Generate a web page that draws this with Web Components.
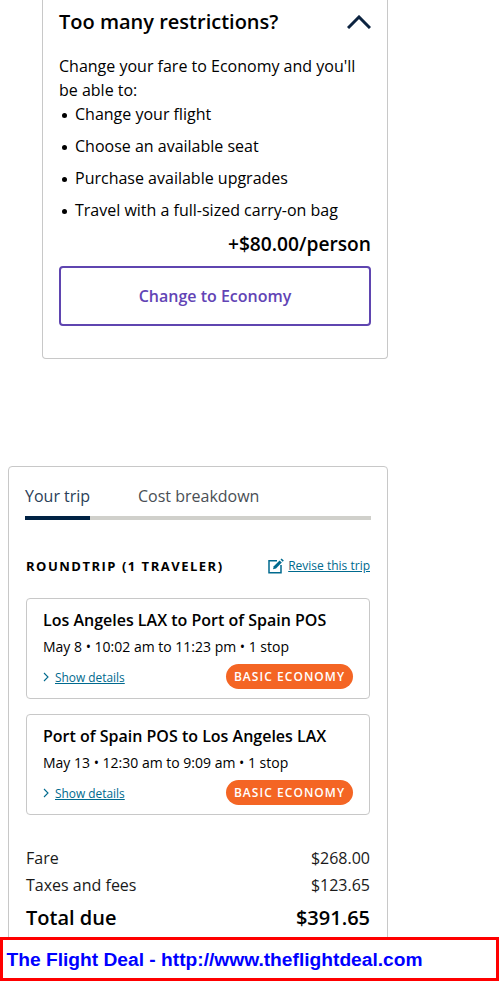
<!DOCTYPE html>
<html>
<head>
<meta charset="utf-8">
<style>
  html, body { margin: 0; padding: 0; background: #fff; }
  body { height: 981px; overflow: hidden; position: relative; font-family: "Open Sans", sans-serif; color: #000; }
</style>
</head>
<body>
<upsell-card price="+$80.00/person" action="Change to Economy">
  <span slot="title">Too many restrictions?</span>
  <span slot="intro">Change your fare to Economy and you'll be able to:</span>
  <li>Change your flight</li>
  <li>Choose an available seat</li>
  <li>Purchase available upgrades</li>
  <li>Travel with a full-sized carry-on bag</li>
</upsell-card>

<trip-summary>
  <flight-card route="Los Angeles LAX to Port of Spain POS" times="May 8 • 10:02 am to 11:23 pm • 1 stop"></flight-card>
  <flight-card route="Port of Spain POS to Los Angeles LAX" times="May 13 • 12:30 am to 9:09 am • 1 stop"></flight-card>
  <div slot="costs">
    <cost-row label="Fare" amount="$268.00"></cost-row>
    <cost-row label="Taxes and fees" amount="$123.65"></cost-row>
    <cost-row total label="Total due" amount="$391.65"></cost-row>
  </div>
</trip-summary>

<deal-banner>The Flight Deal - http://www.theflightdeal.com</deal-banner>

<script>
class UpsellCard extends HTMLElement {
  constructor() {
    super();
    this.attachShadow({ mode: 'open' });
    this.shadowRoot.innerHTML = `
      <style>
        :host {
          display: block;
          box-sizing: border-box;
          width: 346px;
          height: 359px;
          margin-left: 42px;
          padding: 9px 16px 0;
          background: #fff;
          border: 1px solid #c8c8c8;
          border-top: 0;
          border-radius: 0 0 4px 4px;
          font: 400 16px/24px "Open Sans", sans-serif;
          color: #000;
        }
        .head { display: flex; justify-content: space-between; align-items: center; height: 26px; }
        .title { font-size: 20px; font-weight: 600; line-height: 26px; }
        svg { display: block; }
        .intro { margin-top: 19px; }
        ::slotted(li) {
          display: block;
          height: 24px;
          margin-bottom: 8px;
          padding-left: 16px;
        }
        ::slotted(li)::before {
          content: "";
          display: inline-block;
          width: 5px;
          height: 5px;
          margin-left: -13px;
          margin-right: 8px;
          border-radius: 50%;
          background: #000;
          vertical-align: 2px;
        }
        .price { margin-top: 9px; text-align: right; font-size: 19.2px; font-weight: 600; line-height: 26px; }
        button {
          display: block;
          box-sizing: border-box;
          width: 100%;
          height: 60px;
          margin-top: 9px;
          background: #fff;
          border: 2px solid #5f45b0;
          border-radius: 4px;
          color: #6244b5;
          font: 600 16px "Open Sans", sans-serif;
        }
      </style>
      <div class="head">
        <div class="title"><slot name="title"></slot></div>
        <svg width="24" height="14" viewBox="0 0 24 14"><path d="M1 13 L12 2 L23 13" fill="none" stroke="#0c2340" stroke-width="3"/></svg>
      </div>
      <div class="intro"><slot name="intro"></slot></div>
      <div><slot></slot></div>
      <div class="price"></div>
      <button></button>
    `;
    this.shadowRoot.querySelector('.price').textContent = this.getAttribute('price');
    this.shadowRoot.querySelector('button').textContent = this.getAttribute('action');
  }
}

class TripSummary extends HTMLElement {
  constructor() {
    super();
    this.attachShadow({ mode: 'open' });
    this.shadowRoot.innerHTML = `
      <style>
        :host {
          display: block;
          box-sizing: border-box;
          width: 380px;
          height: 520px;
          margin: 107px 0 0 8px;
          padding: 17px 16px 0;
          background: #fff;
          border: 1px solid #c8c8c8;
          border-radius: 4px;
          font: 400 16px/24px "Open Sans", sans-serif;
          color: #000;
        }
        .tabs { display: flex; height: 32px; border-bottom: 4px solid #d0d0cb; white-space: nowrap; }
        .tab { height: 32px; }
        .tab.on { width: 65px; border-bottom: 4px solid #002244; color: #2a4058; }
        .tab.off { margin-left: 48px; color: #4a4f55; }
        .top { display: flex; justify-content: space-between; align-items: center; margin: 34px 1px 0 1px; height: 24px; }
        .heading { font-size: 13px; font-weight: 700; letter-spacing: 1.5px; }
        .revise { display: flex; align-items: center; gap: 4px; font-size: 12px; color: #006a8e; }
        .revise span { text-decoration: underline; }
        .cards { display: flex; flex-direction: column; gap: 15px; margin: 20px 1px 0 1px; }
        .costs { margin: 30px 1px 0 1px; }
      </style>
      <div class="tabs">
        <div class="tab on">Your trip</div>
        <div class="tab off">Cost breakdown</div>
      </div>
      <div class="top">
        <div class="heading">ROUNDTRIP (1 TRAVELER)</div>
        <div class="revise">
          <svg width="16" height="16" viewBox="0 0 16 16" fill="none">
            <path d="M9 2.7H1V14.7H13V7" stroke="#006a8e" stroke-width="1.5"/>
            <path d="M5 11.2 L5.8 8.2 L11.6 2.4 L13.8 4.6 L8 10.4 Z" fill="#006a8e"/>
            <path d="M12.5 1.5 L13.6 .4 L15.8 2.6 L14.7 3.7 Z" fill="#006a8e"/>
          </svg>
          <span>Revise this trip</span>
        </div>
      </div>
      <div class="cards"><slot></slot></div>
      <div class="costs"><slot name="costs"></slot></div>
    `;
  }
}

class FlightCard extends HTMLElement {
  constructor() {
    super();
    this.attachShadow({ mode: 'open' });
    this.shadowRoot.innerHTML = `
      <style>
        :host {
          display: block;
          box-sizing: border-box;
          height: 101px;
          padding: 9px 16px 0;
          border: 1px solid #c8c8c8;
          border-radius: 4px;
          font-family: "Open Sans", sans-serif;
        }
        .route { font-size: 16px; font-weight: 600; line-height: 24px; }
        .times { margin-top: 5px; font-size: 14px; line-height: 20px; }
        .foot { display: flex; justify-content: space-between; align-items: center; margin-top: 7px; height: 25px; }
        .details { display: flex; align-items: center; gap: 6px; margin-top: 1px; font-size: 11.9px; color: #006a8e; }
        .details span { text-decoration: underline; }
        .badge {
          box-sizing: border-box;
          width: 127px;
          height: 25px;
          border-radius: 13px;
          background: #f46524;
          color: #fff;
          font-size: 12px;
          font-weight: 600;
          line-height: 25px;
          letter-spacing: 1.05px;
          text-align: center;
          white-space: nowrap;
        }
      </style>
      <div class="route"></div>
      <div class="times"></div>
      <div class="foot">
        <div class="details">
          <svg width="6" height="10" viewBox="0 0 6 10"><path d="M1 1 L5 5 L1 9" fill="none" stroke="#006a8e" stroke-width="1.1"/></svg>
          <span>Show details</span>
        </div>
        <div class="badge">BASIC ECONOMY</div>
      </div>
    `;
    this.shadowRoot.querySelector('.route').textContent = this.getAttribute('route');
    this.shadowRoot.querySelector('.times').textContent = this.getAttribute('times');
  }
}

class CostRow extends HTMLElement {
  constructor() {
    super();
    this.attachShadow({ mode: 'open' });
    this.shadowRoot.innerHTML = `
      <style>
        :host {
          display: flex;
          justify-content: space-between;
          height: 27px;
          font: 400 16px/27px "Open Sans", sans-serif;
          color: #1a1a1a;
        }
        :host([total]) {
          height: 36px;
          margin-top: 1px;
          font-size: 20px;
          font-weight: 600;
          line-height: 36px;
          color: #000;
        }
      </style>
      <span></span><span></span>
    `;
    const spans = this.shadowRoot.querySelectorAll('span');
    spans[0].textContent = this.getAttribute('label');
    spans[1].textContent = this.getAttribute('amount');
  }
}

class DealBanner extends HTMLElement {
  constructor() {
    super();
    this.attachShadow({ mode: 'open' });
    this.shadowRoot.innerHTML = `
      <style>
        :host {
          display: flex;
          align-items: center;
          box-sizing: border-box;
          position: absolute;
          left: 0;
          top: 937px;
          width: 499px;
          height: 44px;
          padding: 2px 0 0 3.5px;
          background: #fff;
          border: 3px solid #f00;
          color: #00f;
          font: 700 19.2px "Liberation Sans", Arial, sans-serif;
        }
      </style>
      <slot></slot>
    `;
  }
}

customElements.define('upsell-card', UpsellCard);
customElements.define('trip-summary', TripSummary);
customElements.define('flight-card', FlightCard);
customElements.define('cost-row', CostRow);
customElements.define('deal-banner', DealBanner);
</script>
</body>
</html>
